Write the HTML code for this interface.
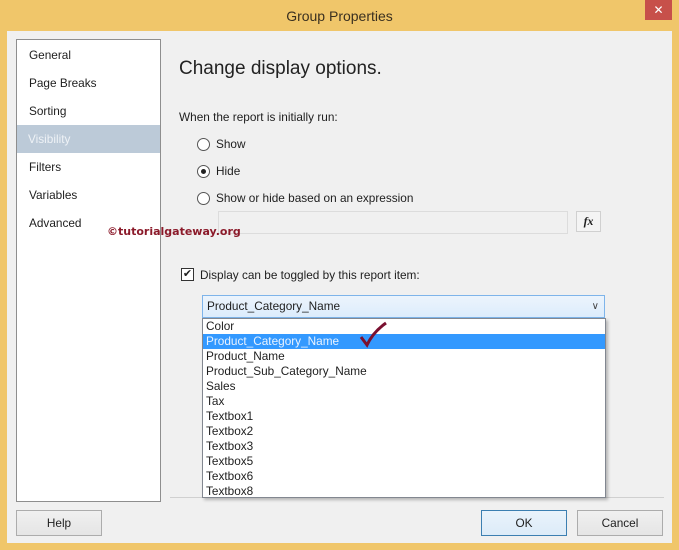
<!DOCTYPE html>
<html><head><style>
*{margin:0;padding:0;box-sizing:border-box}
body{width:679px;height:550px;background:#f0c66a;font-family:"Liberation Sans",sans-serif;font-size:11.8px;color:#1e1e1e;position:relative;overflow:hidden}
.a{position:absolute}
.inner{left:7px;top:31px;width:665px;height:512px;background:#f0f0f0}
.nav div{position:absolute;left:12px;height:28px;line-height:28px}
.btn{position:absolute;top:510px;height:26px;border:1px solid #acacac;background:linear-gradient(#f0f0f0,#e5e5e5);text-align:center;line-height:24px}
.radio{position:absolute;width:13px;height:13px;border:1px solid #555;border-radius:50%;background:#fff}
.li{position:absolute;left:3px;height:15px;line-height:15px}
</style></head><body>
<div class="a" style="left:0;top:0;width:679px;height:31px;text-align:center;line-height:33px;font-size:14px;color:#3a3020">Group Properties</div>
<div class="a" style="left:645px;top:0;width:27px;height:20px;background:#c7504a;color:#fff;text-align:center;line-height:20px;font-size:12px">✕</div>
<div class="a inner"></div>
<div class="a nav" style="left:16px;top:39px;width:145px;height:463px;background:#fff;border:1px solid #8e8e8e">
<div style="top:1px">General</div>
<div style="top:29px">Page Breaks</div>
<div style="top:57px">Sorting</div>
<div style="top:85px;left:0;width:143px;padding-left:11px;background:#bccad8;color:#eef2f6">Visibility</div>
<div style="top:113px">Filters</div>
<div style="top:141px">Variables</div>
<div style="top:169px">Advanced</div>
</div>
<div class="a" style="left:179px;top:58px;font-size:19px;color:#222">Change display options.</div>
<div class="a" style="left:179px;top:110px">When the report is initially run:</div>
<div class="radio" style="left:197px;top:138px"></div><div class="a" style="left:216px;top:137px">Show</div>
<div class="radio" style="left:197px;top:165px"><div class="a" style="left:3px;top:3px;width:5px;height:5px;border-radius:50%;background:#222"></div></div><div class="a" style="left:216px;top:164px">Hide</div>
<div class="radio" style="left:197px;top:192px"></div><div class="a" style="left:216px;top:191px">Show or hide based on an expression</div>
<div class="a" style="left:218px;top:211px;width:350px;height:23px;border:1px solid #dcdcdc;background:#f0f0f0"></div>
<div class="a" style="left:576px;top:211px;width:25px;height:21px;border:1px solid #d0d0d0;background:#f4f4f4;text-align:center;font-family:'Liberation Serif',serif;font-style:italic;font-weight:bold;line-height:19px">fx</div>
<div class="a" style="left:107px;top:225px;font-family:'DejaVu Sans',sans-serif;font-weight:bold;font-size:11px;color:#8b1a2a">©tutorialgateway.org</div>
<div class="a" style="left:181px;top:268px;width:13px;height:13px;border:1px solid #333;background:#fff;font-size:11px;line-height:11px;text-align:center">✔</div>
<div class="a" style="left:200px;top:268px">Display can be toggled by this report item:</div>
<div class="a" style="left:202px;top:295px;width:403px;height:23px;border:1px solid #7eb4ea;background:linear-gradient(#ecf4fc,#dcecfc);padding-left:4px;line-height:21px">Product_Category_Name<span class="a" style="right:5px;top:0;font-size:10px;color:#444">∨</span></div>
<div class="a" style="left:170px;top:497px;width:494px;height:1px;background:#d0d0d0"></div>
<div class="a" style="left:202px;top:318px;width:404px;height:180px;background:#fff;border:1px solid #828790;box-shadow:2px 2px 3px rgba(0,0,0,.25)">
<div class="li" style="top:0">Color</div>
<div class="li" style="top:15px;left:0;width:402px;padding-left:3px;background:#3399ff;color:#e8f2ff">Product_Category_Name</div>
<div class="li" style="top:30px">Product_Name</div>
<div class="li" style="top:45px">Product_Sub_Category_Name</div>
<div class="li" style="top:60px">Sales</div>
<div class="li" style="top:75px">Tax</div>
<div class="li" style="top:90px">Textbox1</div>
<div class="li" style="top:105px">Textbox2</div>
<div class="li" style="top:120px">Textbox3</div>
<div class="li" style="top:135px">Textbox5</div>
<div class="li" style="top:150px">Textbox6</div>
<div class="li" style="top:165px">Textbox8</div>
</div>
<svg class="a" style="left:358px;top:320px" width="30" height="30"><path d="M3 17 L9 25 Q15 12 28 3" stroke="#7a1030" stroke-width="3" fill="none"/></svg>
<div class="btn" style="left:16px;width:86px">Help</div>
<div class="btn" style="left:481px;width:86px;border-color:#3c7fb1;background:linear-gradient(#eaf3fb,#dcebf8)">OK</div>
<div class="btn" style="left:577px;width:86px">Cancel</div>
</body></html>
